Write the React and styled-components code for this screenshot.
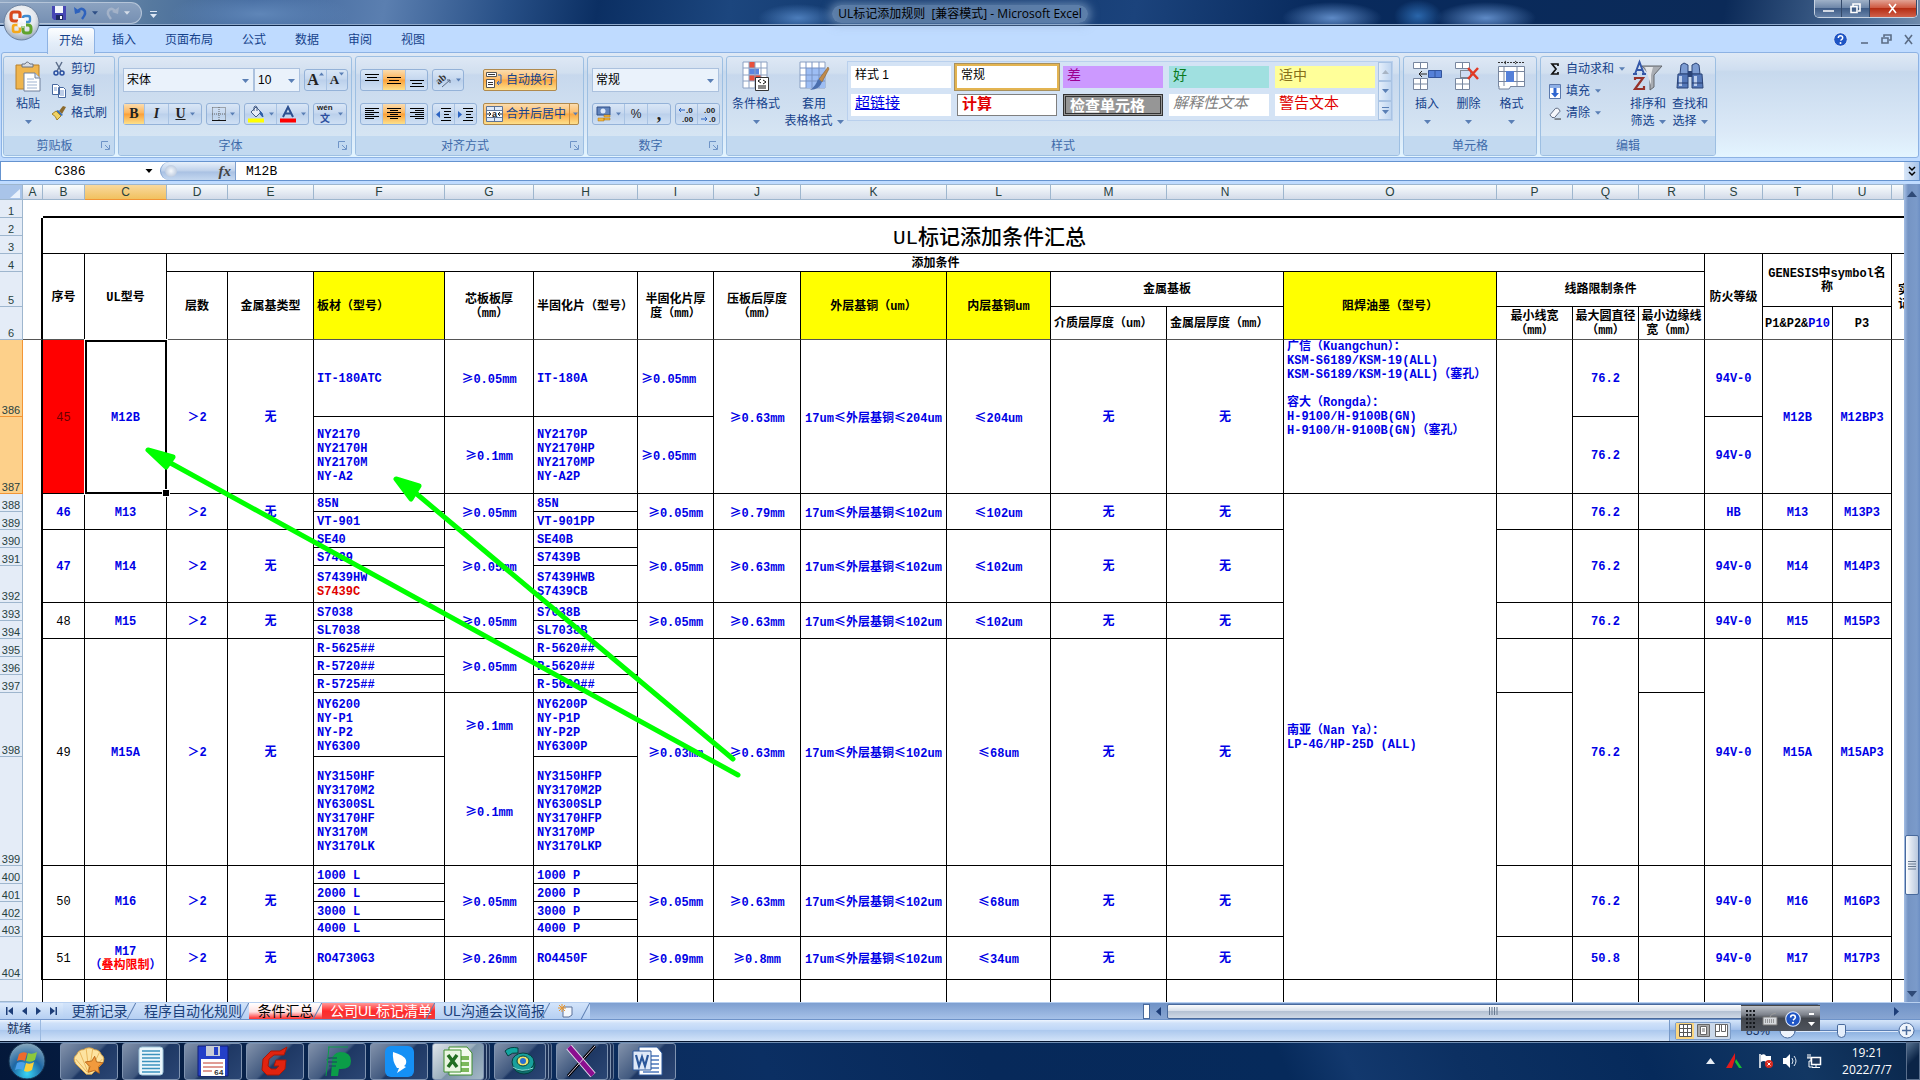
import styled, { createGlobalStyle, css } from 'styled-components'

const GlobalStyle = createGlobalStyle`
  * {
    box-sizing: border-box;
  }
  body {
    margin: 0;
    background: #0a2a5a;
  }
  button, input, select {
    font: inherit;
    color: inherit;
    margin: 0;
    padding: 0;
    border: 0;
    background: none;
    border-radius: 0;
  }
  svg {
    display: block;
    flex: none;
    overflow: visible;
  }
`

const Window = styled.div`
  display: flex;
  flex-direction: column;
  height: 100vh;
  overflow: hidden;
  background: #bfdbff;
  color: #15428b;
  font-family: 'Liberation Sans', 'Noto Sans CJK SC', sans-serif;
  font-size: 12px;
  line-height: 16px;
`

/* ---------- title bar ---------- */

const TitleBar = styled.header`
  position: relative;
  display: flex;
  align-items: flex-start;
  justify-content: space-between;
  height: 26px;
  flex: none;
  border-bottom: 1px solid #10294d;
  box-shadow: inset 0 -1px 0 #8ea9cc;
  background:
    radial-gradient(ellipse 50px 16px at 1332px 18px, #5e8ac6, transparent),
    radial-gradient(ellipse 24px 16px at 1418px 16px, #2a66ab, transparent),
    radial-gradient(ellipse 50px 16px at 1486px 18px, #5e8ac6, transparent),
    radial-gradient(ellipse 40px 14px at 798px 18px, #4c7dbb, transparent),
    radial-gradient(ellipse 90px 22px at 260px 14px, #5f86b8, transparent),
    linear-gradient(100deg, #93a9c4 0, #56799f 150px, #3f659a 250px, #5b7fb0 380px, #274f86 500px, #0b2f63 590px, #1c467e 720px, #0e3468 900px, #1b437c 1120px, #082a5d 1300px, #0b2a58 1700px, #53749d 1850px, #7c95b3 1920px);
`
const QuickAccess = styled.div`
  display: flex;
  align-items: center;
  gap: 8px;
  height: 22px;
  width: 142px;
  margin-top: 2px;
  padding-left: 52px;
  border: 1px solid #b4c4d8;
  border-left: 0;
  border-radius: 0 11px 11px 0;
  background: linear-gradient(#8ba2c0, #7690b3);
`
const QuickItem = styled.button`
  display: flex;
  align-items: center;
  gap: 5px;
`
const QuickMore = styled.button`
  margin: 11px auto 0 8px;
`
const OfficeButton = styled.button`
  position: absolute;
  left: 3px;
  top: 4px;
  z-index: 3;
`
const Title = styled.h1`
  margin: 5px 0 0;
  font: 400 12px/18px 'Open Sans', 'Noto Sans CJK SC', sans-serif;
  color: #000;
  white-space: pre;
  padding: 0 6px;
  border-radius: 9px;
  background: rgba(150, 178, 212, 0.55);
  box-shadow: 0 0 8px 3px rgba(150, 178, 212, 0.55);
`
const Caption = styled.div`
  display: flex;
  width: 104px;
  height: 18px;
  margin-right: 2px;
  border: 1px solid #c7d3e2;
  border-top: 0;
  border-radius: 0 0 5px 5px;
  overflow: hidden;
`
const CaptionButton = styled.button`
  display: flex;
  align-items: center;
  justify-content: center;
  flex: ${(props) => (props.$close ? 47 : 27)};
  border-right: 1px solid #33496a;
  background: ${(props) =>
    props.$close
      ? 'linear-gradient(#e2a294, #cf5a42 45%, #b52d14 50%, #d0604a)'
      : 'linear-gradient(#9fb1c8, #6e87a9 45%, #3f5c86 50%, #6783a9)'};
`
const TitleSide = styled.div`
  display: flex;
  flex: 1;
  align-items: flex-start;
  justify-content: ${(props) => (props.$end ? 'flex-end' : 'flex-start')};
`

/* ---------- ribbon ---------- */

const TabRow = styled.nav`
  display: flex;
  align-items: flex-end;
  gap: 5px;
  height: 26px;
  flex: none;
  padding-left: 47px;
`
const RibbonTab = styled.button`
  height: 25px;
  padding: 0 11px;
  border: 1px solid transparent;
  border-bottom: 0;
  color: #15428b;
  ${(props) =>
    props.$active &&
    css`
      position: relative;
      z-index: 1;
      height: 27px;
      margin: 0 0 -2px;
      border-color: #8db2e3;
      border-radius: 4px 4px 0 0;
      background: linear-gradient(#fdfeff, #e3edf9 60%, #dbe6f4);
    `}
`
const BookControls = styled.div`
  display: flex;
  align-items: center;
  gap: 11px;
  height: 26px;
  margin-left: auto;
  padding-right: 6px;
`
const Ribbon = styled.section`
  display: flex;
  gap: 3px;
  height: 106px;
  flex: none;
  margin: 0 1px;
  padding: 3px 1px 2px;
  border: 1px solid #8db2e3;
  border-radius: 3px;
  background: linear-gradient(#dfe9f5, #cfdef0 16%, #c7d9ed 18%, #dceaf8 78%, #e3f5ff);
`
const GroupBox = styled.section`
  display: flex;
  flex-direction: column;
  flex: none;
  width: ${(props) => props.$w}px;
  height: 100px;
  border: 1px solid #9dbfe2;
  border-radius: 3px;
  overflow: hidden;
  background: linear-gradient(#dee8f5, #d1dfef 16px, #c7d8ed 18px, #d6e5f3 79px);
`
const GroupBody = styled.div`
  display: flex;
  flex: 1;
  min-height: 0;
  padding: 0 4px;
`
const GroupTitle = styled.h2`
  display: flex;
  align-items: center;
  height: 19px;
  margin: 0;
  padding: 0 4px;
  font-size: 12px;
  font-weight: 400;
  color: #3e6aaa;
  background: #c2d9f0;
  span {
    flex: 1;
    text-align: center;
  }
`
const Stack = styled.div`
  display: flex;
  flex-direction: column;
  gap: ${(props) => props.$gap || 0}px;
  padding-top: ${(props) => props.$top || 0}px;
  padding-left: ${(props) => props.$inset || 0}px;
`
const Line = styled.div`
  display: flex;
  align-items: center;
  gap: 4px;
  height: 24px;
`
const BigButton = styled.button`
  display: flex;
  flex-direction: column;
  align-items: center;
  width: ${(props) => props.$w}px;
  padding-top: 4px;
  line-height: 17px;
  white-space: nowrap;
`
const BigIcon = styled.span`
  height: 35px;
`
const BigLabel = styled.span`
  display: flex;
  align-items: center;
  gap: 4px;
  min-height: 17px;
`
const SmallButton = styled.button`
  display: flex;
  align-items: center;
  gap: 5px;
  height: 22px;
  white-space: nowrap;
`
const ButtonSet = styled.div`
  display: flex;
  height: 22px;
  border: 1px solid #94b2d8;
  border-radius: 3px;
  background: linear-gradient(#d9e6f6, #c6d8ef 45%, #bbd0eb 50%, #cfe0f4);
`
const Tool = styled.button`
  display: flex;
  align-items: center;
  justify-content: center;
  gap: 4px;
  width: ${(props) => props.$w}px;
  color: #222;
  border-right: 1px solid #a9c3e3;
  &:last-child {
    border-right: 0;
  }
  ${(props) =>
    props.$on &&
    css`
      background: linear-gradient(#fbdcae, #fdb55b 45%, #fb9f38 50%, #fde08b);
    `}
`
const SizeTool = styled(Tool)`
  gap: 0;
  align-items: flex-start;
  svg {
    margin-top: 2px;
  }
`
const Letter = styled.span`
  font: 700 ${(props) => props.$size || 14}px/20px 'Liberation Serif', serif;
  font-style: ${(props) => (props.$italic ? 'italic' : 'normal')};
  text-decoration: ${(props) => (props.$under ? 'underline' : 'none')};
`
const WideTool = styled.button`
  display: flex;
  align-items: center;
  gap: 3px;
  width: ${(props) => props.$w}px;
  height: 22px;
  padding-left: 2px;
  white-space: nowrap;
  border: 1px solid #b08a4e;
  border-radius: 2px;
  background: linear-gradient(#fbdcae, #fdbd6a 45%, #fba743 50%, #fde08b);
`
const SplitArrow = styled.span`
  display: flex;
  align-items: center;
  align-self: stretch;
  margin-left: auto;
  padding: 0 3px;
  border-left: 1px solid #c98e3f;
`
const Rule = styled.span`
  width: 1px;
  height: 64px;
  margin: 14px 3px 0 3px;
  background: #8fb0da;
`
const ComboBox = styled.span`
  position: relative;
  display: flex;
  width: ${(props) => props.$w}px;
  height: 24px;
  border: 1px solid #abc1de;
  background: #eaf2fb;
  color: #000;
  select {
    flex: 1;
    min-width: 0;
    padding: 0 3px;
    appearance: none;
    outline: none;
  }
  svg {
    position: absolute;
    right: 4px;
    top: 10px;
    pointer-events: none;
  }
`
const ComboPair = styled.span`
  display: flex;
`
const Gallery = styled.div`
  display: flex;
  align-self: flex-start;
  width: 546px;
  height: 60px;
  margin-top: 4px;
  border: 1px solid #b9d0ed;
  background: #d4e3f5;
`
const Swatches = styled.div`
  display: grid;
  grid-template-columns: repeat(5, 100px);
  grid-auto-rows: 22px;
  gap: 6px;
  flex: 1;
  padding: 4px 3px;
`
const Swatch = styled.button`
  display: flex;
  align-items: flex-start;
  padding: 0 4px;
  text-align: left;
  line-height: 18px;
  font-size: ${(props) => props.$size || 15}px;
  color: ${(props) => props.$fg || '#000'};
  background: ${(props) => props.$bg || '#fff'};
  ${(props) => props.$bold && 'font-weight: 700;'}
  ${(props) => props.$italic && 'font-style: italic;'}
  ${(props) => props.$link && 'text-decoration: underline;'}
  ${(props) => props.$border && `border: ${props.$border};`}
  ${(props) => props.$picked && 'outline: 2px solid #e3b451; box-shadow: 0 0 0 3px #a8905e;'}
`
const GalleryScroll = styled.div`
  display: flex;
  flex-direction: column;
  width: 14px;
  button {
    display: flex;
    flex: 1;
    align-items: center;
    justify-content: center;
    border: 1px solid #a9c3e3;
    background: linear-gradient(90deg, #e4eefa, #bfd5f0);
  }
`

/* ---------- formula bar ---------- */

const FormulaBar = styled.div`
  display: flex;
  flex: none;
  height: 20px;
  margin: 3px 0;
  border: 1px solid #6593cf;
  background: #fff;
  color: #000;
  font: 13px/16px 'Liberation Mono', monospace;
  input {
    min-width: 0;
    padding-top: 2px;
    outline: none;
  }
`
const NameBox = styled.div`
  display: flex;
  align-items: center;
  width: 159px;
  padding-right: 5px;
  input {
    width: 138px;
    text-align: center;
    margin-right: 6px;
  }
`
const FxArea = styled.div`
  display: flex;
  align-items: center;
  justify-content: space-between;
  width: 76px;
  padding: 0 4px;
  border: 1px solid #7ea0cf;
  border-width: 0 1px 0 1px;
  border-radius: 10px 0 0 10px;
  background: linear-gradient(#e8f0fa, #bdd0ea 50%, #a9c1e3 55%, #c5d8f0);
  i {
    width: 12px;
    height: 12px;
    border-radius: 50%;
    background: radial-gradient(#f6f9fd, #a8bad4);
  }
`
const FxButton = styled.button`
  font: italic 700 15px/16px 'Liberation Serif', serif;
  color: #444;
`
const FormulaInput = styled.input`
  flex: 1;
  padding-left: 10px;
`
const Expand = styled.button`
  display: flex;
  align-items: center;
  justify-content: center;
  width: 15px;
  background: linear-gradient(90deg, #d8e6f8, #a9c5ea);
`

/* ---------- sheet ---------- */

const SheetArea = styled.main`
  position: relative;
  display: flex;
  flex: 1;
  min-height: 0;
  overflow: hidden;
  background: #fff;
`
const Grid = styled.table`
  flex: 1;
  align-self: flex-start;
  width: 100%;
  min-width: 0;
  table-layout: fixed;
  border-collapse: separate;
  border-spacing: 0;
  color: #000;
  font: 700 12px/14px 'Liberation Mono', 'Noto Sans CJK SC', monospace;
`
const ColHead = styled.th`
  height: 16px;
  padding: 0;
  overflow: hidden;
  font: 400 12px/14px 'Liberation Sans', sans-serif;
  color: #27413e;
  border-right: 1px solid #9eb6ce;
  border-bottom: 1px solid ${(props) => (props.$on ? '#f29536' : '#9eb6ce')};
  border-top: 1px solid #9eb6ce;
  background: ${(props) => (props.$on ? 'linear-gradient(#f9d99f, #f1c15f)' : 'linear-gradient(#f9fcfd, #d3dbe9)')};
`
const Corner = styled.th`
  padding: 0;
  border: 1px solid #9eb6ce;
  border-left: 0;
  background: #a9c4e9;
  svg {
    margin: 3px 2px 0 auto;
  }
`
const RowHead = styled.th`
  padding: 0;
  vertical-align: bottom;
  font: 400 11px/12px 'Liberation Sans', sans-serif;
  color: #27413e;
  border-right: 1px solid ${(props) => (props.$on ? '#f29536' : '#9eb6ce')};
  border-bottom: 1px solid ${(props) => (props.$on ? '#f29536' : '#9eb6ce')};
  background: ${(props) => (props.$on ? '#fdd08a' : '#e4ecf7')};
`
const Margin = styled.td`
  padding: 0;
  border-right: ${(props) => props.$edge}px solid #000;
  border-bottom: ${(props) => (props.$frozen ? '1px solid #555' : '0')};
`
const Cell = styled.td`
  position: relative;
  padding: ${(props) => (props.$top ? 0 : 2)}px 0 0 ${(props) => (props.$indent ? 6 : props.$left ? 3 : 0)}px;
  overflow: ${(props) => (props.$selected ? 'visible' : 'hidden')};
  white-space: pre;
  text-align: ${(props) => (props.$left ? 'left' : 'center')};
  vertical-align: ${(props) => (props.$top ? 'top' : 'middle')};
  color: ${(props) => props.$fg || '#0000e6'};
  background: ${(props) => props.$bg || 'transparent'};
  font-weight: ${(props) => (props.$plain ? 400 : 700)};
  border-right: ${(props) => (props.$noRight ? '0' : '1px solid #000')};
  border-bottom: ${(props) => (props.$noBottom ? '0' : props.$frozen ? '1px solid #555' : '1px solid #000')};
`
const TopCell = styled.td`
  border-bottom: 2px solid #000;
`
const TitleCell = styled.td`
  padding: 6px 0 0 32px;
  text-align: center;
  font: 500 21px/28px 'Liberation Mono', 'Noto Sans CJK SC', monospace;
  border-bottom: 1px solid #000;
`
const Wide = styled.span`
  font-family: 'Noto Sans CJK SC', sans-serif;
`
const Tint = styled.span`
  color: ${(props) => props.$fg};
`
const Selection = styled.span`
  position: absolute;
  inset: 0 -1px -1px 0;
  z-index: 1;
  border: 2px solid #000;
  box-shadow: 0 0 0 1px #fff;
  &::after {
    content: '';
    position: absolute;
    right: -5px;
    bottom: -5px;
    width: 6px;
    height: 6px;
    border: 1px solid #fff;
    background: #000;
  }
`
const Arrows = styled.svg`
  position: absolute;
  left: 0;
  top: 0;
  z-index: 2;
  pointer-events: none;
`
const VScroll = styled.div`
  display: flex;
  flex-direction: column;
  align-items: center;
  flex: none;
  width: 16px;
  padding: 7px 0 5px;
  background: linear-gradient(90deg, #a3bde3 0, #7594c4 25%, #7b9bca 80%, #6d8fc4);
`
const VThumb = styled.div`
  display: flex;
  align-items: center;
  justify-content: center;
  width: 14px;
  height: 60px;
  border: 1px solid #48699c;
  border-radius: 2px;
  background: linear-gradient(90deg, #fff, #dfe6f0 40%, #b9c8de);
`
const Spring = styled.span`
  flex: ${(props) => props.$n};
`

/* ---------- sheet tabs and status ---------- */

const Bottom = styled.footer`
  position: relative;
  flex: none;
`
const TabStrip = styled.div`
  display: flex;
  height: 17px;
  border-top: 1px solid #b8d0f0;
  background: linear-gradient(#7e9fd0, #a6c1e8);
`
const TabNav = styled.div`
  display: flex;
  align-items: center;
  justify-content: space-between;
  width: 63px;
  padding: 0 6px;
  background: linear-gradient(#dceafb, #b5cff2);
`
const SheetTab = styled.button`
  position: relative;
  width: ${(props) => props.$w}px;
  height: 16px;
  padding: 0 8px 1px;
  overflow: hidden;
  text-align: center;
  white-space: nowrap;
  font-size: 14px;
  line-height: 14px;
  color: ${(props) => props.$fg || '#1a3f7a'};
  background: ${(props) => props.$bg || 'linear-gradient(#d3e4fa, #b5cff2)'};
  &::after {
    content: '';
    position: absolute;
    top: -2px;
    right: 4px;
    width: 1px;
    height: 20px;
    background: #5f80b4;
    transform: rotate(28deg);
  }
`
const HScroll = styled.div`
  display: flex;
  align-items: center;
  width: 777px;
  margin-left: auto;
  padding-right: 21px;
  background: linear-gradient(#6f92c6, #87a5d2);
`
const SplitGrip = styled.span`
  width: 7px;
  height: 15px;
  margin-right: 6px;
  border: 1px solid #48699c;
  background: #fff;
`
const HThumb = styled.div`
  display: flex;
  align-items: center;
  justify-content: center;
  width: 652px;
  height: 15px;
  margin: 0 auto 0 6px;
  border: 1px solid #48699c;
  border-radius: 2px;
  background: linear-gradient(#fafcfe, #d7dfea 45%, #b5c2d4 50%, #cfd9e6);
`
const StatusBar = styled.div`
  display: flex;
  align-items: stretch;
  height: 22px;
  border-top: 1px solid #6e93c9;
  color: #15305c;
  background: linear-gradient(#eef5fe 0, #cfe1f9 15%, #bfd7f7 45%, #adc9ee 50%, #d2e3f8);
`
const StatusText = styled.span`
  width: 41px;
  padding: 1px 7px;
  border-right: 1px solid #9bb9e0;
`
const StatusRight = styled.div`
  display: flex;
  align-items: center;
  width: 251px;
  margin-left: auto;
  padding: 0 5px;
  border-left: 1px solid #7799c8;
  background: linear-gradient(#d5e5f9, #a3c0ea 45%, #89aede 50%, #b0cdf0);
`
const ViewButtons = styled.div`
  display: flex;
  height: 18px;
  border: 1px solid #7d9dc9;
  border-radius: 2px;
  background: #cbd9ea;
`
const ViewButton = styled.button`
  display: flex;
  align-items: center;
  justify-content: center;
  width: 18px;
  background: ${(props) => (props.$on ? '#fbd680' : 'transparent')};
`
const ZoomValue = styled.button`
  width: 42px;
  margin-left: 6px;
`
const ZoomRange = styled.input`
  flex: 1;
  min-width: 0;
  appearance: none;
  height: 16px;
  background: linear-gradient(transparent 7px, #5b7fb4 7px, #5b7fb4 8px, #dce9fa 8px, #dce9fa 9px, transparent 9px);
  &::-webkit-slider-thumb {
    appearance: none;
    width: 9px;
    height: 14px;
    border: 1px solid #47699c;
    border-radius: 2px 2px 5px 5px;
    background: #e4eefb;
  }
`
const ImeBar = styled.div`
  position: absolute;
  right: 100px;
  top: 3px;
  display: flex;
  align-items: center;
  gap: 7px;
  width: 79px;
  height: 26px;
  padding: 0 5px;
  border-top: 1px solid #444;
  background: linear-gradient(#b9bec6, #7d828b 35%, #43474e 50%, #4e535c);
`

/* ---------- taskbar ---------- */

const TaskBar = styled.footer`
  display: flex;
  align-items: center;
  flex: none;
  height: 39px;
  border-top: 1px solid #05152f;
  box-shadow: inset 0 1px 0 #6f8cb0;
  background: linear-gradient(65deg, #04183a 0, #0a2854 380px, #0b2f63 700px, #07295a 900px, #062a5b 1170px, #12386d 1230px, #0c3062 1330px, #062a5b 1500px, #123763 1640px, #092549 1760px);
`
const StartButton = styled.button`
  width: 60px;
  padding-left: 8px;
`
const TaskButton = styled.button`
  display: flex;
  align-items: center;
  justify-content: center;
  width: 58px;
  height: 37px;
  margin-right: 4px;
  border: 1px solid #7f93b0;
  border-radius: 3px;
  background: ${(props) =>
    props.$on
      ? 'linear-gradient(135deg, #dfe5ea, #9aaebd 50%, #7c94a8 52%, #a5b9c8)'
      : 'linear-gradient(135deg, #8292ab, #41597f 48%, #1e3864 52%, #2b4674)'};
  ${(props) =>
    props.$stack &&
    css`
      width: 52px;
      margin-right: 10px;
      box-shadow: 2px 0 0 #1c3158, 3px 0 0 #7f93b0, 5px 0 0 #1c3158, 6px 0 0 #5e7596;
    `}
`
const Tray = styled.div`
  display: flex;
  align-items: center;
  gap: 8px;
  margin-left: auto;
  padding-right: 6px;
`
const Clock = styled.time`
  width: 78px;
  font: 12px/17px 'Open Sans', sans-serif;
  text-align: center;
  color: #fff;
`
const ShowDesktop = styled.button`
  width: 14px;
  height: 38px;
  border: 1px solid #5a6f8d;
  background: linear-gradient(135deg, #55708f, #0b2447 50%);
`

/* ---------- drawings ---------- */

const Caret = ({ color = '#5a7fb5', w = 7, up }) => (
  <svg width={w} height="4" viewBox="0 0 7 4">
    <path d={up ? 'M0 4h7L3.5 0z' : 'M0 0h7L3.5 4z'} fill={color} />
  </svg>
)

const Launcher = () => (
  <svg width="9" height="9" viewBox="0 0 9 9" fill="none" stroke="#6f94c7">
    <path d="M.5 7V.5H7M4 4l4 4M8.5 4v4.5H4" />
  </svg>
)

const OfficeLogo = () => (
  <svg width="37" height="37" viewBox="0 0 37 37">
    <defs>
      <radialGradient id="orb" cx="50%" cy="35%" r="65%">
        <stop offset="0" stopColor="#fff" />
        <stop offset=".6" stopColor="#e2e6ec" />
        <stop offset="1" stopColor="#9aa9bd" />
      </radialGradient>
    </defs>
    <circle cx="18.5" cy="18.5" r="17.5" fill="url(#orb)" stroke="#6b819f" />
    <g fill="none">
      <path d="M15 17h-4q-3 0-3-3v-3q0-3 3-3h4q2 0 2 2v4" stroke="#d8491c" strokeWidth="3.200" />
      <path d="M20 14q0-2 2-2h3q2 0 2 2v2q0 2-2 2h-2" stroke="#3f8bd0" strokeWidth="2.400" />
      <path d="M15 21h-3q-2 0-2 2v3q0 2 2 2h3q2 0 2-2v-3" stroke="#f5a81c" strokeWidth="2.600" />
      <path d="M20 22v4q0 3 3 3h2q3 0 3-3v-2q0-3-3-3h-2" stroke="#5fa32c" strokeWidth="3" />
      <path d="M17 15v3h-3M20 15v3h3M17 24v-3h-3M20 24v-3h3" stroke="#fff" />
    </g>
  </svg>
)

const SaveIcon = () => (
  <svg width="14" height="14" viewBox="0 0 14 14">
    <path d="M0 0h14v14H2l-2-2z" fill="#4646b4" />
    <path d="M3 0h8v7H3z" fill="#f2f5fb" />
    <path d="M4 9h7v5H4z" fill="#1f2a62" />
    <path d="M8 10h2v3H8z" fill="#fff" />
  </svg>
)

const UndoIcon = ({ color = '#2e62bd', flip }) => (
  <svg width="13" height="14" viewBox="0 0 13 14">
    <g transform={flip ? 'translate(13 0) scale(-1 1)' : undefined}>
      <path d="M0 1l1 7 6-2z" fill={color} />
      <path d="M3 6q4-5 7-2t-2 9" fill="none" stroke={color} strokeWidth="2.500" />
    </g>
  </svg>
)

const PasteIcon = () => (
  <svg width="26" height="32" viewBox="0 0 26 32">
    <path d="M1 4h23v24H1z" fill="#efb54e" stroke="#b9802b" />
    <path d="M7 6V3h3q2-4 5 0h3v3z" fill="#d7dbe2" stroke="#6b7280" />
    <path d="M9 12h11l5 5v13H9z" fill="#fff" stroke="#71809b" />
    <path d="M20 12v5h5" fill="#dce6f4" stroke="#71809b" />
    <path d="M12 18h7M12 21h10M12 24h10M12 27h10" stroke="#9fb3d1" />
  </svg>
)

const CutIcon = () => (
  <svg width="14" height="14" viewBox="0 0 14 14" fill="none">
    <path d="M4 0l5 9M10 0L5 9" stroke="#5d6f8c" strokeWidth="1.500" />
    <circle cx="4" cy="11" r="2" stroke="#2a4fa0" strokeWidth="1.500" />
    <circle cx="10" cy="11" r="2" stroke="#2a4fa0" strokeWidth="1.500" />
  </svg>
)

const CopyIcon = () => (
  <svg width="14" height="14" viewBox="0 0 14 14" fill="#fff" stroke="#47689f">
    <path d="M.5.500h5l2 2v8h-7zM6.500 3.500h5l2 2v8h-7z" />
    <path d="M2 4h3M2 6h3M8 7h4M8 9h4M8 11h4" stroke="#7b9bd0" />
  </svg>
)

const BrushIcon = () => (
  <svg width="14" height="14" viewBox="0 0 14 14">
    <path d="M14 1l-3-1-4 5 3 3z" fill="#8c6a2c" />
    <path d="M6 4l5 5-2 1-5-5z" fill="#3b6fb0" />
    <path d="M4 5l5 5-4 4q-1-4-5-6z" fill="#f0d264" stroke="#a58428" />
  </svg>
)

const Bars = ({ rows, indent }) => (
  <svg width="16" height="15" viewBox="0 0 16 15">
    {rows.map(([x, y, w]) => (
      <path key={y} d={`M${x} ${y}.500h${w}`} stroke="#000" strokeWidth="1" />
    ))}
    {indent === 'out' && <path d="M4 4v7L0 7.500z" fill="#2b63c2" />}
    {indent === 'in' && <path d="M0 4v7l4-3.500z" fill="#2b63c2" />}
  </svg>
)

const lines = (y, list, x = 1) => list.map((w, i) => [x + (14 - w) / 2, y + i * 3, w])
const centred = (list) => list.map((w, i) => [8 - w / 2, 1 + i * 2, w])
const leftBars = [14, 9, 14, 9, 14, 9].map((w, i) => [1, 1 + i * 2, w])
const rightBars = [14, 9, 14, 9, 14, 9].map((w, i) => [15 - w, 1 + i * 2, w])
const indentBars = [[5, 1, 10], [8, 4, 7], [8, 7, 5], [8, 10, 7], [5, 13, 10]]

const OrientIcon = () => (
  <svg width="16" height="18" viewBox="0 0 16 18">
    <text x="1" y="11" transform="rotate(-40 6 10)" fontSize="10" fontWeight="700" fontFamily="Liberation Serif" fill="#333">
      ab
    </text>
    <path d="M6 16l8-7M14 9h-3M14 9v3" stroke="#5b6b85" fill="none" />
  </svg>
)

const WrapIcon = () => (
  <svg width="17" height="16" viewBox="0 0 17 16" fill="none">
    <path d="M.5.500h10v4H.5zM.5 7.500h8v8h-8z" fill="#fff" stroke="#555" />
    <path d="M2 2.500h7M2 10.500h5M2 12.500h5" stroke="#333" />
    <path d="M12 3h3v8h-4M13 9l-2 2 2 2" stroke="#2b63c2" />
  </svg>
)

const MergeIcon = () => (
  <svg width="17" height="16" viewBox="0 0 17 16" fill="none">
    <path d="M.5.500h16v15H.5z" fill="#dfe9f8" stroke="#5d7396" />
    <path d="M.5 4.500h16M.5 11.500h16M8.500.500v4M8.500 11.500v4" stroke="#5d7396" />
    <path d="M1 5h15v6H1z" fill="#fff" />
    <text x="6" y="11" fontSize="9" fontWeight="700" fontFamily="Liberation Sans" fill="#222">
      a
    </text>
    <path d="M1 8h4M3 6l2 2-2 2M16 8h-4M14 6l-2 2 2 2" stroke="#222" />
  </svg>
)

const BorderIcon = () => (
  <svg width="14" height="14" viewBox="0 0 14 14" fill="none">
    <path d="M.5.500h13v13M.5.500v13M7 0v13M0 7h14" stroke="#666" strokeDasharray="1 1" />
    <path d="M0 13.500h14" stroke="#111" />
  </svg>
)

const FillIcon = () => (
  <svg width="17" height="17" viewBox="0 0 17 17">
    <path d="M3 6l5-5 5 5-5 5z" fill="#e8edf6" stroke="#445c85" />
    <path d="M6 5V1q1-2 3 0v4" fill="none" stroke="#445c85" />
    <path d="M12 5q3 2 3 6-3-1-3-6" fill="#2f5fa8" stroke="#2f5fa8" />
    <path d="M0 12.500h16v4H0z" fill="#ff0" />
  </svg>
)

const FontColorIcon = () => (
  <svg width="17" height="17" viewBox="0 0 17 17">
    <path d="M3 11L8 1l5 10M5 7.500h6" stroke="#2c4f8f" strokeWidth="2" fill="none" />
    <path d="M0 12.500h16v4H0z" fill="#f00" />
  </svg>
)

const PhoneticIcon = () => (
  <svg width="17" height="20" viewBox="0 0 17 20">
    <text x="0" y="6" fontSize="8" fontFamily="Liberation Sans" fontWeight="700" fill="#222">
      wén
    </text>
    <text x="3" y="18" fontSize="10" fontFamily="Noto Sans CJK SC" fontWeight="700" fill="#2c4f9f">
      文
    </text>
  </svg>
)

const MoneyIcon = () => (
  <svg width="16" height="16" viewBox="0 0 16 16">
    <path d="M1 1h13v8H1z" fill="#6385bd" stroke="#2f4f88" />
    <circle cx="7" cy="5" r="2.500" fill="#dce8fa" />
    <path d="M8 9h6v2H8zM8 12h6v2H8zM2 12h6v3H2z" fill="#f2b63c" stroke="#a87216" strokeWidth=".5" />
  </svg>
)

const DecimalIcon = ({ less }) => (
  <svg width="17" height="17" viewBox="0 0 17 17" fontFamily="Liberation Sans" fontSize="8" fontWeight="700" fill="#222">
    <text x={less ? 4 : 8} y="7">
      {less ? '.00' : '.0'}
    </text>
    <text x={less ? 9 : 4} y="16">
      {less ? '.0' : '.00'}
    </text>
    <path d={less ? 'M1 13h6M5 11l2 2-2 2' : 'M1 4h6M3 2L1 4l2 2'} stroke="#2b63c2" fill="none" />
  </svg>
)

const CondIcon = () => (
  <svg width="28" height="30" viewBox="0 0 28 30">
    <path d="M1 1h24v26H1z" fill="#fff" stroke="#8ba0c2" />
    <path d="M7 1h6v6H7zM7 14h12v6H7z" fill="#e8503c" />
    <path d="M7 7.500h10v6H7z" fill="#5b86e0" />
    <path d="M1 7h24M1 14h24M1 20h24M7 1v26M13 1v26M19 1v26" stroke="#8ba0c2" fill="none" />
    <path d="M13.500 16.500h13v13h-13z" fill="#fff" stroke="#333" />
    <path d="M19 18l-3 2 3 2M21 19l3 2-3 2M16 25h8M16 27h8" stroke="#111" fill="none" />
  </svg>
)

const TableFormatIcon = () => (
  <svg width="30" height="30" viewBox="0 0 30 30">
    <path d="M1 1h25v26H1z" fill="#fff" stroke="#8ba0c2" />
    <path d="M7 7h19v20H7z" fill="#9dbdf3" />
    <path d="M1 7h25M1 14h25M1 20h25M7 1v26M13 1v26M20 1v26" stroke="#7893c4" fill="none" />
    <path d="M29 6l-9 12 3 3 7-13z" fill="#c08a4a" stroke="#7c5524" strokeWidth=".5" />
    <path d="M19 18l4 3q-2 7-12 8 6-4 8-11z" fill="#4b6fae" />
  </svg>
)

const CellsIcon = ({ kind }) => (
  <svg width="30" height="30" viewBox="0 0 30 30" fill="#fff" stroke="#77869f">
    {kind === 'format' ? (
      <>
        <path d="M1.500 5.500h26v20h-26z" />
        <path d="M7 5v20M20 5v20M1 10.500h26M1 20.500h26" />
        <path d="M9 10h8v11H9z" fill="#5580d8" stroke="none" />
        <path d="M1 1.500h26M9 0l-2 1.500 2 1.500M18 0l2 1.500-2 1.500" stroke="#333" strokeDasharray="2 1" fill="none" />
        <path d="M2 25v3h10l2-3" />
      </>
    ) : (
      <>
        <path d="M1.500 1.500h14v6h-14zM8.500 1.500v6M1.500 17.500h14v11h-14zM8.500 17.500v11M1.500 23h14" />
        {kind === 'insert' ? (
          <>
            <path d="M16.500 9.500h13v7h-13zM23 9.500v7" fill="#5580d8" stroke="#33549b" />
            <path d="M15 13H7M10 10l-3 3 3 3" stroke="#222" fill="none" />
          </>
        ) : (
          <>
            <path d="M6.500 9.500h10v7h-10z" strokeDasharray="1 1" fill="#cfdcf2" stroke="#333" />
            <path d="M14 7l10 11M24 7L14 18" stroke="#e03a25" strokeWidth="2.500" />
          </>
        )}
      </>
    )}
  </svg>
)

const SigmaIcon = () => (
  <svg width="12" height="14" viewBox="0 0 12 14" fill="none">
    <path d="M9 4V2H3l4 5-4 5h6v-2" stroke="#111" strokeWidth="1.700" />
  </svg>
)

const FillDownIcon = () => (
  <svg width="12" height="15" viewBox="0 0 12 15">
    <path d="M.5.500h11v14H.5z" fill="#fff" stroke="#5b79ad" />
    <path d="M1 1h10v3H1z" fill="#8fb0e6" />
    <path d="M4.500 4h3v5H10l-4 4.500L2 9h2.500z" fill="#2f66d0" />
  </svg>
)

const EraserIcon = () => (
  <svg width="12" height="13" viewBox="0 0 13 13">
    <path d="M1 8l6-7q2-1 4 1l1 2-6 7q-3 1-5-3z" fill="#f5f7fb" stroke="#55627a" />
    <path d="M6 12.500h7" stroke="#222" />
  </svg>
)

const SortIcon = () => (
  <svg width="30" height="30" viewBox="0 0 30 30">
    <path d="M9 5h20l-8 9v12l-4 3V14z" fill="#a9adb3" stroke="#65696f" />
    <path d="M12 6h8l-2 8v10z" fill="#e4e6e9" />
    <path d="M2 13L6.500 1 11 13M4 9h5M0 13h4M9 13h4" stroke="#3558a8" strokeWidth="2" fill="none" />
    <path d="M2 19v-2h8L2 28h9v-3" stroke="#96322b" strokeWidth="2.200" fill="none" />
  </svg>
)

const FindIcon = () => (
  <svg width="28" height="30" viewBox="0 0 28 30">
    <path d="M5 4l3-2 4 2v9H4zM16 4l4-2 3 2 1 9h-8z" fill="#7c9cd2" stroke="#2b4478" />
    <path d="M2 13h10v14H1zM16 13h10l1 14H16z" fill="#5578b8" stroke="#2b4478" />
    <path d="M12 10h4v6h-4z" fill="#2b4478" />
    <path d="M3 15h3v10H3zM18 15h3v10h-3z" fill="#bccfee" />
    <path d="M1 22h11M16 22h11" stroke="#243b6c" />
  </svg>
)

const HelpIcon = ({ size = 15 }) => (
  <svg width={size} height={size} viewBox="0 0 15 15">
    <circle cx="7.500" cy="7.500" r="6.800" fill="#1f55c4" stroke="#dfeafc" />
    <path d="M5.300 6q0-2.200 2.200-2.200T9.700 6q0 1-2.200 2.500" stroke="#fff" strokeWidth="1.500" fill="none" />
    <circle cx="7.500" cy="11" r="1" fill="#fff" />
  </svg>
)

const Glyph = ({ d, w = 11, color = '#5c6d86' }) => (
  <svg width={w} height="11" viewBox="0 0 11 11" fill="none" stroke={color} strokeWidth="1.600">
    <path d={d} />
  </svg>
)

const StartOrb = () => (
  <svg width="38" height="38" viewBox="0 0 38 38">
    <defs>
      <radialGradient id="start" cx="50%" cy="85%" r="85%">
        <stop offset="0" stopColor="#38d6f5" />
        <stop offset=".5" stopColor="#1e67a4" />
        <stop offset="1" stopColor="#8ba9bd" />
      </radialGradient>
    </defs>
    <circle cx="19" cy="19" r="18" fill="url(#start)" stroke="#16324f" />
    <path d="M11 12q4-3 8-1l-2 8q-4-2-8 0z" fill="#ee6a2c" />
    <path d="M20 11q4 2 9-1l-2 8q-4 3-9 1z" fill="#8cc83c" />
    <path d="M9 21q4-2 8 0l-2 7q-4-2-8 0z" fill="#4aa0ea" />
    <path d="M18 21q4 2 8-1l-2 8q-4 3-8 1z" fill="#fbcf3a" />
  </svg>
)

const ShellIcon = () => (
  <svg width="32" height="30" viewBox="0 0 34 30">
    <path d="M12 27L3 18Q-1 12 4 8 6 3 11 3q6-4 12 0 5 0 7 5 5 4 1 10l-9 9-2 2h-6z" fill="#fde3a0" stroke="#d9a345" />
    <path d="M15 27L3 13M16 27L7 5M17 27L14 2M17 27l4-25M18 27L28 6M19 27l12-14" stroke="#e8b45a" />
    <path d="M23 10l2 6 7 1-5 4 1 7-5-3-7 2 2-6-5-5 7-1z" fill="#f29a3c" stroke="#b5651a" />
  </svg>
)

const NotesIcon = () => (
  <svg width="26" height="30" viewBox="0 0 26 30">
    <rect x="1" y="1" width="24" height="28" rx="3" fill="#eaf6fc" stroke="#9fc5da" />
    <path d="M4 5h18M4 8.500h18M4 12h18M4 15.500h18M4 19h18M4 22.500h18M4 26h18" stroke="#3c92bd" strokeWidth="1.500" />
  </svg>
)

const FloppyIcon = () => (
  <svg width="32" height="32" viewBox="0 0 32 32">
    <path d="M1 1h30v30H1z" fill="#2440c8" stroke="#101e78" />
    <path d="M9 1h14v10H9z" fill="#c8ccd6" />
    <path d="M17 2h4v8h-4z" fill="#2440c8" />
    <path d="M4 14h24v17H4z" fill="#fff" />
    <path d="M6 18h20M6 22h20M6 26h9" stroke="#c0392b" />
    <text x="17" y="30" fontSize="8" fontFamily="Liberation Mono" fontWeight="700" fill="#333">
      64
    </text>
  </svg>
)

const RedGIcon = () => (
  <svg width="30" height="30" viewBox="0 0 30 30">
    <path d="M27 1l-3 8H14l-5 4-1 7 3 3h5l3-3h-5l2-6h10l-1 9-6 6H7l-5-5 1-11 8-8h9z" fill="#e2230f" stroke="#a81809" />
  </svg>
)

const GreenPIcon = () => (
  <svg width="30" height="32" viewBox="0 0 30 32">
    <path d="M18 7q11 0 11 9t-12 8l-1 7H9l1-14q0-9 8-10z" fill="#0b9d48" />
    <path d="M6 2h20M7 2L4 31M4 15l12-5" stroke="#0b9d48" fill="none" />
    <path d="M6 13h9M6 17h9M7 21h7" stroke="#1f3c64" />
  </svg>
)

const BirdIcon = () => (
  <svg width="29" height="31" viewBox="0 0 29 31">
    <rect width="29" height="31" rx="6" fill="#1590f5" />
    <path d="M8 6q11 3 13 8 1 4-2 6l2 1-9 6 2-5h-2q-5-7-4-16z" fill="#fff" />
  </svg>
)

const ExcelIcon = () => (
  <svg width="32" height="32" viewBox="0 0 32 32">
    <path d="M7 2h18l5 6v22H7z" fill="#f4faf0" stroke="#3f8f2f" />
    <path d="M18 11h9v4h-9zM18 17h9v4h-9zM18 23h9v4h-9z" fill="#7db85c" />
    <path d="M2 5h17v22H2z" fill="#eaf5e2" stroke="#3f8f2f" />
    <path d="M6 10l9 12M15 10L6 22" stroke="#226e22" strokeWidth="3.500" />
  </svg>
)

const RingIcon = () => (
  <svg width="32" height="30" viewBox="0 0 32 30">
    <ellipse cx="20" cy="19" rx="11" ry="9" fill="#0d6f6c" stroke="#06403f" />
    <ellipse cx="19" cy="16" rx="11" ry="9" fill="#18a19c" stroke="#06403f" />
    <ellipse cx="19" cy="15" rx="6" ry="5" fill="#f2e36b" stroke="#06403f" />
    <circle cx="19" cy="15" r="3" fill="#2a6fd0" />
    <path d="M1 5q5-5 13-3v5q-6-1-10 3z" fill="#12a5a0" stroke="#06403f" />
    <path d="M9 21q8 6 20 1" stroke="#8de0dc" fill="none" />
  </svg>
)

const CrossIcon = () => (
  <svg width="34" height="32" viewBox="0 0 34 32">
    <path d="M30 1L3 31" stroke="#000" strokeWidth="3" />
    <path d="M4 2l24 28" stroke="#e8dff0" strokeWidth="7" />
    <path d="M4 2l24 28" stroke="#8b0f8f" strokeWidth="5" />
    <path d="M30 1L3 31" stroke="#d8c8dd" strokeWidth="1" />
  </svg>
)

const WordIcon = () => (
  <svg width="32" height="32" viewBox="0 0 32 32">
    <path d="M8 2h18l5 6v22H8z" fill="#fff" stroke="#2b579a" />
    <path d="M19 11h9M19 15h9M19 19h9M19 23h9M12 27h16" stroke="#4c78bd" strokeWidth="1.500" />
    <path d="M2 6h18v19H2z" fill="#dfe9f8" stroke="#2b579a" />
    <path d="M5 10l3 11 3-9 3 9 3-11" stroke="#2b579a" strokeWidth="2.200" fill="none" />
  </svg>
)

const TrayIcon = ({ kind }) => (
  <svg width="16" height="16" viewBox="0 0 16 16" fill="none">
    {kind === 'alert' && (
      <>
        <path d="M9 0v6l-3 9H0z" fill="#e01b1b" />
        <path d="M10 6l6 9h-3L9 9z" fill="#18c030" />
      </>
    )}
    {kind === 'flag' && (
      <>
        <path d="M2 1v14" stroke="#fff" strokeWidth="1.500" />
        <path d="M3 2q4-2 5 1h5v6H8Q6 7 3 9z" fill="#fff" />
        <circle cx="11" cy="11" r="4" fill="#d92b20" />
        <path d="M9.500 9.500l3 3M12.500 9.500l-3 3" stroke="#fff" />
      </>
    )}
    {kind === 'sound' && (
      <>
        <path d="M1 5h3l4-4v14l-4-4H1z" fill="#fff" />
        <path d="M10 5q2 3 0 6M12 3q4 5 0 10" stroke="#dfe8f2" />
      </>
    )}
    {kind === 'net' && (
      <>
        <path d="M5.500 4.500h9v7h-9z" fill="#1c3558" stroke="#fff" strokeWidth="1.500" />
        <path d="M6 14.500h8M10 12v2M2 1v4M4 1v4M1 5h4v3H3v6h4" stroke="#fff" />
      </>
    )}
  </svg>
)

/* ---------- sheet contents ---------- */

const columns = [
  ['A', 20], ['B', 42], ['C', 82], ['D', 61], ['E', 86], ['F', 131], ['G', 89], ['H', 104],
  ['I', 76], ['J', 87], ['K', 146], ['L', 104], ['M', 116], ['N', 117], ['O', 213], ['P', 76],
  ['Q', 66], ['R', 66], ['S', 58], ['T', 70], ['U', 59],
]

const black = '#000'
const blue = '#0000e6'
const yellow = '#ffff00'
const head = (t, more) => ({ t, fg: black, ...more })
const left = (t, more) => ({ t, left: true, ...more })

const outer = '17um≤外层基铜≤102um'

const headRows = [
  {
    n: 4,
    h: 18,
    cells: [
      head('序号', { rs: 3, frozen: true }),
      head('UL型号', { rs: 3, frozen: true }),
      head('添加条件', { cs: 15 }),
      head('防火等级', { rs: 3, frozen: true }),
      head('GENESIS中symbol名\n称', { cs: 2, rs: 2 }),
      head('实\n记', { rs: 3, frozen: true, left: true, indent: true, noRight: true }),
    ],
  },
  {
    n: 5,
    h: 35,
    cells: [
      head('层数', { rs: 2, frozen: true }),
      head('金属基类型', { rs: 2, frozen: true }),
      head('板材（型号）', { rs: 2, frozen: true, left: true, bg: yellow }),
      head('芯板板厚\n（mm）', { rs: 2, frozen: true }),
      head('半固化片（型号）', { rs: 2, frozen: true, left: true }),
      head('半固化片厚\n度（mm）', { rs: 2, frozen: true }),
      head('压板后厚度\n（mm）', { rs: 2, frozen: true }),
      head('外层基铜（um）', { rs: 2, frozen: true, bg: yellow }),
      head('内层基铜um', { rs: 2, frozen: true, bg: yellow }),
      head('金属基板', { cs: 2 }),
      head('阻焊油墨（型号）', { rs: 2, frozen: true, bg: yellow }),
      head('线路限制条件', { cs: 3 }),
    ],
  },
  {
    n: 6,
    h: 33,
    cells: [
      head('介质层厚度（um）', { frozen: true, left: true }),
      head('金属层厚度（mm）', { frozen: true, left: true }),
      head('最小线宽\n（mm）', { frozen: true }),
      head('最大圆直径\n（mm）', { frozen: true }),
      head('最小边缘线\n宽（mm）', { frozen: true }),
      head('P1&P2&', { frozen: true, tint: { t: 'P10', fg: blue } }),
      head('P3', { frozen: true }),
    ],
  },
]

const block = (rs, no, name, f, g, h, i, j, k, l, q, s, more = {}) => [
  { t: no, rs, ...(more.no || { plain: true, fg: black }) },
  { t: name, rs, ...more.name },
  { t: '＞2', rs },
  { t: '无', rs },
  left(f),
  g,
  left(h),
  { t: i, rs },
  { t: j, rs },
  { t: k, rs },
  { t: l, rs },
  { t: '无', rs },
  { t: '无', rs },
  ...(more.ink ? [more.ink] : []),
  { t: '', rs: more.prs || rs },
  { t: q, rs },
  { t: '', rs: more.prs || rs },
  { t: s, rs },
  { t: more.code || name, rs },
  { t: `${more.code || name}P3`, rs },
]

const inks =
  '广信（Kuangchun）：\nKSM-S6189/KSM-19(ALL)\nKSM-S6189/KSM-19(ALL)（塞孔）\n\n容大（Rongda）：\nH-9100/H-9100B(GN)\nH-9100/H-9100B(GN)（塞孔）'

const bodyRows = [
  {
    n: 386,
    h: 77,
    on: true,
    cells: [
      { t: '45', rs: 2, plain: true, fg: '#6b0000', bg: '#ff0000' },
      { t: 'M12B', rs: 2, selected: true },
      { t: '＞2', rs: 2 },
      { t: '无', rs: 2 },
      left('IT-180ATC'),
      { t: '≥0.05mm' },
      left('IT-180A'),
      left('≥0.05mm'),
      { t: '≥0.63mm', rs: 2 },
      { t: '17um≤外层基铜≤204um', rs: 2 },
      { t: '≤204um', rs: 2 },
      { t: '无', rs: 2 },
      { t: '无', rs: 2 },
      left(inks, { rs: 2, top: true }),
      { t: '', rs: 2 },
      { t: '76.2' },
      { t: '', rs: 2 },
      { t: '94V-0' },
      { t: 'M12B', rs: 2 },
      { t: 'M12BP3', rs: 2 },
      { t: '', rs: 19, noRight: true },
    ],
  },
  {
    n: 387,
    h: 77,
    on: true,
    cells: [
      left('NY2170\nNY2170H\nNY2170M\nNY-A2'),
      { t: '≥0.1mm' },
      left('NY2170P\nNY2170HP\nNY2170MP\nNY-A2P'),
      left('≥0.05mm'),
      { t: '76.2' },
      { t: '94V-0' },
    ],
  },
  {
    n: 388,
    h: 18,
    cells: block(2, '46', 'M13', '85N', { t: '≥0.05mm', rs: 2 }, '85N', '≥0.05mm', '≥0.79mm', outer, '≤102um', '76.2', 'HB', {
      no: {},
      ink: left('南亚（Nan Ya）：\nLP-4G/HP-25D (ALL)', { rs: 17 }),
    }),
  },
  { n: 389, h: 18, cells: [left('VT-901'), left('VT-901PP')] },
  {
    n: 390,
    h: 18,
    cells: block(3, '47', 'M14', 'SE40', { t: '≥0.05mm', rs: 3 }, 'SE40B', '≥0.05mm', '≥0.63mm', outer, '≤102um', '76.2', '94V-0', { no: {} }),
  },
  { n: 391, h: 18, cells: [left('S7439'), left('S7439B')] },
  {
    n: 392,
    h: 37,
    cells: [left('S7439HW\n', { tint: { t: 'S7439C', fg: '#e00000' } }), left('S7439HWB\nS7439CB')],
  },
  {
    n: 393,
    h: 18,
    cells: block(2, '48', 'M15', 'S7038', { t: '≥0.05mm', rs: 2 }, 'S7038B', '≥0.05mm', '≥0.63mm', outer, '≤102um', '76.2', '94V-0'),
  },
  { n: 394, h: 18, cells: [left('SL7038'), left('SL7038B')] },
  {
    n: 395,
    h: 18,
    cells: block(5, '49', 'M15A', 'R-5625##', { t: '≥0.05mm', rs: 3 }, 'R-5620##', '≥0.03mm', '≥0.63mm', outer, '≤68um', '76.2', '94V-0', { prs: 3 }),
  },
  { n: 396, h: 18, cells: [left('R-5720##'), left('R-5620##')] },
  { n: 397, h: 18, cells: [left('R-5725##'), left('R-5620##')] },
  {
    n: 398,
    h: 64,
    cells: [
      left('NY6200\nNY-P1\nNY-P2\nNY6300'),
      { t: '≥0.1mm', noBottom: true },
      left('NY6200P\nNY-P1P\nNY-P2P\nNY6300P'),
      { t: '', rs: 2 },
      { t: '', rs: 2 },
    ],
  },
  {
    n: 399,
    h: 109,
    cells: [
      left('NY3150HF\nNY3170M2\nNY6300SL\nNY3170HF\nNY3170M\nNY3170LK'),
      { t: '≥0.1mm' },
      left('NY3150HFP\nNY3170M2P\nNY6300SLP\nNY3170HFP\nNY3170MP\nNY3170LKP'),
    ],
  },
  {
    n: 400,
    h: 18,
    cells: block(4, '50', 'M16', '1000 L', { t: '≥0.05mm', rs: 4 }, '1000 P', '≥0.05mm', '≥0.63mm', outer, '≤68um', '76.2', '94V-0'),
  },
  { n: 401, h: 18, cells: [left('2000 L'), left('2000 P')] },
  { n: 402, h: 18, cells: [left('3000 L'), left('3000 P')] },
  { n: 403, h: 17, cells: [left('4000 L'), left('4000 P')] },
  {
    n: 404,
    h: 43,
    cells: block(1, '51', 'M17\n', 'RO4730G3', { t: '≥0.26mm' }, 'RO4450F', '≥0.09mm', '≥0.8mm', outer, '≤34um', '50.8', '94V-0', {
      code: 'M17',
      name: { tint: { before: '（', t: '叠构限制', after: '）', fg: '#ff0000' } },
    }),
  },
]

const withWideSigns = (text) => text.split(/([≥≤])/).map((part, i) => (i % 2 ? <Wide key={i}>{part}</Wide> : part))

const DataCell = ({ cell }) => (
  <Cell
    rowSpan={cell.rs}
    colSpan={cell.cs}
    $left={cell.left}
    $indent={cell.indent}
    $top={cell.top}
    $fg={cell.fg}
    $bg={cell.bg}
    $plain={cell.plain}
    $frozen={cell.frozen}
    $noRight={cell.noRight}
    $noBottom={cell.noBottom}
    $selected={cell.selected}
  >
    {withWideSigns(cell.t)}
    {cell.tint && (
      <>
        {cell.tint.before}
        <Tint $fg={cell.tint.fg}>{cell.tint.t}</Tint>
        {cell.tint.after}
      </>
    )}
    {cell.selected && <Selection />}
  </Cell>
)

const SheetRow = ({ row, frozen }) => (
  <tr style={{ height: row.h }}>
    <RowHead scope="row" $on={row.on}>
      {row.n}
    </RowHead>
    <Margin $edge={2} $frozen={frozen} />
    {row.cells.map((cell, index) => (
      <DataCell key={index} cell={cell} />
    ))}
  </tr>
)

const Sheet = () => (
  <SheetArea>
    <Grid>
      <colgroup>
        <col style={{ width: 23 }} />
        {columns.map(([name, width]) => (
          <col key={name} style={{ width }} />
        ))}
        <col />
      </colgroup>
      <thead>
        <tr>
          <Corner>
            <svg width="10" height="9" viewBox="0 0 10 9">
              <path d="M10 0v9H0z" fill="#eaf2fc" />
            </svg>
          </Corner>
          {columns.map(([name]) => (
            <ColHead key={name} scope="col" $on={name === 'C'}>
              {name}
            </ColHead>
          ))}
          <ColHead />
        </tr>
      </thead>
      <tbody>
        <tr style={{ height: 18 }}>
          <RowHead scope="row">1</RowHead>
          <Margin $edge={0} />
          <TopCell colSpan={21} />
        </tr>
        <tr style={{ height: 18 }}>
          <RowHead scope="row">2</RowHead>
          <Margin $edge={2} />
          <TitleCell colSpan={21} rowSpan={2}>
            UL标记添加条件汇总
          </TitleCell>
        </tr>
        <tr style={{ height: 18 }}>
          <RowHead scope="row">3</RowHead>
          <Margin $edge={2} />
        </tr>
        {headRows.map((row) => (
          <SheetRow key={row.n} row={row} frozen={row.n === 6} />
        ))}
        {bodyRows.map((row) => (
          <SheetRow key={row.n} row={row} />
        ))}
        <tr style={{ height: 22 }}>
          <RowHead />
          <Margin $edge={1} />
          {columns.slice(1).map(([name]) => (
            <Cell key={name} $noBottom />
          ))}
          <Cell $noBottom $noRight />
        </tr>
      </tbody>
    </Grid>
    <Arrows width="760" height="620" viewBox="0 184 760 620">
      <g stroke="#00ff00" strokeWidth="5" strokeLinecap="round" strokeLinejoin="round" fill="#00ff00">
        <path d="M738 775L165 460M733 759L412 490" />
        <path d="M148 450l25 7-7 10zM396 479l23 7-8 13z" />
      </g>
    </Arrows>
    <VScroll>
      <svg width="10" height="6" viewBox="0 0 10 6">
        <path d="M0 6l5-6 5 6z" fill="#2f4a77" />
      </svg>
      <Spring $n={639} />
      <VThumb>
        <svg width="8" height="8" viewBox="0 0 8 8">
          <path d="M0 .5h8M0 3h8M0 5.500h8M0 8h8" stroke="#66788f" />
        </svg>
      </VThumb>
      <Spring $n={96} />
      <svg width="10" height="6" viewBox="0 0 10 6">
        <path d="M0 0h10L5 6z" fill="#2f4a77" />
      </svg>
    </VScroll>
  </SheetArea>
)

const Group = ({ title, w, children, launcher }) => (
  <GroupBox $w={w}>
    <GroupBody>{children}</GroupBody>
    <GroupTitle>
      <span>{title}</span>
      {launcher && <Launcher />}
    </GroupTitle>
  </GroupBox>
)

const Combo = ({ label, value, w }) => (
  <ComboBox $w={w}>
    <select aria-label={label} defaultValue={value}>
      <option>{value}</option>
    </select>
    <Caret />
  </ComboBox>
)

const Big = ({ w, icon, text, sub }) => (
  <BigButton $w={w}>
    <BigIcon>{icon}</BigIcon>
    <BigLabel>{text}</BigLabel>
    <BigLabel>
      {sub}
      <Caret />
    </BigLabel>
  </BigButton>
)

const tabs = ['开始', '插入', '页面布局', '公式', '数据', '审阅', '视图']

const styleCells = [
  { t: '样式 1', $size: 12 },
  { t: '常规', $size: 12, $picked: true },
  { t: '差', $size: 14, $fg: '#9c0090', $bg: '#cc99ff' },
  { t: '好', $size: 14, $fg: '#0a7a1e', $bg: '#a0e0e0' },
  { t: '适中', $size: 14, $fg: '#85701a', $bg: '#ffff99' },
  { t: '超链接', $fg: blue, $link: true },
  { t: '计算', $fg: '#e00000', $bold: true, $border: '1px solid #7f7f7f' },
  { t: '检查单元格', $fg: '#fff', $bg: '#969696', $bold: true, $border: '3px double #333' },
  { t: '解释性文本', $fg: '#808080', $italic: true },
  { t: '警告文本', $fg: '#e00000' },
]

const taskItems = [
  { name: 'Shell', icon: <ShellIcon /> },
  { name: 'Notes', icon: <NotesIcon /> },
  { name: 'Disk', icon: <FloppyIcon /> },
  { name: 'Genesis', icon: <RedGIcon /> },
  { name: 'Pcb', icon: <GreenPIcon /> },
  { name: 'Bird', icon: <BirdIcon /> },
  { name: 'Excel', icon: <ExcelIcon />, on: true, stack: true },
  { name: 'Camera', icon: <RingIcon />, stack: true },
  { name: 'X', icon: <CrossIcon />, stack: true },
  { name: 'Word', icon: <WordIcon /> },
]

const App = () => (
  <Window>
    <GlobalStyle />
    <TitleBar>
      <OfficeButton aria-label="Office">
        <OfficeLogo />
      </OfficeButton>
      <TitleSide>
        <QuickAccess>
          <QuickItem aria-label="保存">
            <SaveIcon />
          </QuickItem>
          <QuickItem aria-label="撤消">
            <UndoIcon />
            <Caret color="#2e4f86" w={6} />
          </QuickItem>
          <QuickItem aria-label="恢复">
            <UndoIcon flip color="#a3b2c8" />
            <Caret color="#d5dde8" w={6} />
          </QuickItem>
        </QuickAccess>
        <QuickMore aria-label="自定义">
          <svg width="7" height="7" viewBox="0 0 7 7">
            <path d="M0 .5h7" stroke="#dfe8f5" />
            <path d="M0 3h7L3.500 7z" fill="#dfe8f5" />
          </svg>
        </QuickMore>
      </TitleSide>
      <Title>{'UL标记添加规则  [兼容模式] - Microsoft Excel'}</Title>
      <TitleSide $end>
        <Caption>
          <CaptionButton aria-label="最小化">
            <Glyph d="M0 8h11" color="#fff" />
          </CaptionButton>
          <CaptionButton aria-label="还原">
            <Glyph d="M3 3V1h7v7H8M1 3.500h6v6H1z" color="#fff" />
          </CaptionButton>
          <CaptionButton $close aria-label="关闭">
            <Glyph d="M2 1l7 9M9 1l-7 9" color="#fff" />
          </CaptionButton>
        </Caption>
      </TitleSide>
    </TitleBar>
    <TabRow>
      {tabs.map((tab, index) => (
        <RibbonTab key={tab} $active={index === 0}>
          {tab}
        </RibbonTab>
      ))}
      <BookControls>
        <button aria-label="帮助">
          <HelpIcon />
        </button>
        <button aria-label="最小化窗口">
          <Glyph d="M2 9h7" />
        </button>
        <button aria-label="还原窗口">
          <Glyph d="M3 3V1h7v5H8M1 4h6v5H1z" />
        </button>
        <button aria-label="关闭窗口">
          <Glyph d="M2 1l7 9M9 1l-7 9" />
        </button>
      </BookControls>
    </TabRow>
    <Ribbon>
      <Group title="剪贴板" w={112} launcher>
        <Big w={40} icon={<PasteIcon />} text="粘贴" />
        <Stack $top={1} $inset={4}>
          <SmallButton><CutIcon />剪切</SmallButton>
          <SmallButton><CopyIcon />复制</SmallButton>
          <SmallButton><BrushIcon />格式刷</SmallButton>
        </Stack>
      </Group>
      <Group title="字体" w={234} launcher>
        <Stack $top={11} $gap={10}>
          <Line>
            <ComboPair>
              <Combo label="字体" value="宋体" w={131} />
              <Combo label="字号" value="10" w={46} />
            </ComboPair>
            <ButtonSet>
              <SizeTool $w={22} aria-label="增大字号"><Letter $size={16}>A</Letter><Caret w={5} up /></SizeTool>
              <SizeTool $w={20} aria-label="减小字号"><Letter $size={13}>A</Letter><Caret w={5} /></SizeTool>
            </ButtonSet>
          </Line>
          <Line>
            <ButtonSet>
              <Tool $w={21} $on><Letter>B</Letter></Tool>
              <Tool $w={24}><Letter $italic>I</Letter></Tool>
              <Tool $w={32}><Letter $under>U</Letter><Caret w={5} /></Tool>
            </ButtonSet>
            <ButtonSet>
              <Tool $w={32} aria-label="边框"><BorderIcon /><Caret w={5} /></Tool>
            </ButtonSet>
            <ButtonSet>
              <Tool $w={32} aria-label="填充颜色"><FillIcon /><Caret w={5} /></Tool>
              <Tool $w={31} aria-label="字体颜色"><FontColorIcon /><Caret w={5} /></Tool>
            </ButtonSet>
            <ButtonSet>
              <Tool $w={32} aria-label="拼音"><PhoneticIcon /><Caret w={5} /></Tool>
            </ButtonSet>
          </Line>
        </Stack>
      </Group>
      <Group title="对齐方式" w={229} launcher>
        <Stack $top={11} $gap={10}>
          <Line>
            <ButtonSet>
              <Tool $w={22} aria-label="顶端对齐"><Bars rows={lines(1, [14, 10, 14])} /></Tool>
              <Tool $w={23} $on aria-label="垂直居中"><Bars rows={lines(4, [14, 10, 14])} /></Tool>
              <Tool $w={21} aria-label="底端对齐"><Bars rows={lines(7, [14, 10, 14])} /></Tool>
            </ButtonSet>
            <ButtonSet>
              <Tool $w={30} aria-label="方向"><OrientIcon /><Caret w={5} /></Tool>
            </ButtonSet>
          </Line>
          <Line>
            <ButtonSet>
              <Tool $w={22} aria-label="左对齐"><Bars rows={leftBars} /></Tool>
              <Tool $w={23} $on aria-label="居中"><Bars rows={centred([14, 8, 14, 8, 14, 8])} /></Tool>
              <Tool $w={21} aria-label="右对齐"><Bars rows={rightBars} /></Tool>
            </ButtonSet>
            <ButtonSet>
              <Tool $w={22} aria-label="减少缩进量"><Bars rows={indentBars} indent="out" /></Tool>
              <Tool $w={21} aria-label="增加缩进量"><Bars rows={indentBars} indent="in" /></Tool>
            </ButtonSet>
          </Line>
        </Stack>
        <Rule />
        <Stack $top={11} $gap={10}>
          <Line>
            <WideTool $w={74}><WrapIcon />自动换行</WideTool>
          </Line>
          <Line>
            <WideTool $w={96}>
              <MergeIcon />
              合并后居中
              <SplitArrow><Caret w={5} /></SplitArrow>
            </WideTool>
          </Line>
        </Stack>
      </Group>
      <Group title="数字" w={136} launcher>
        <Stack $top={11} $gap={10}>
          <Line>
            <Combo label="数字格式" value="常规" w={127} />
          </Line>
          <Line>
            <ButtonSet>
              <Tool $w={32} aria-label="会计数字格式"><MoneyIcon /><Caret w={5} /></Tool>
              <Tool $w={23}>%</Tool>
              <Tool $w={22}><Letter $size={18}>,</Letter></Tool>
            </ButtonSet>
            <ButtonSet>
              <Tool $w={22} aria-label="增加小数位数"><DecimalIcon /></Tool>
              <Tool $w={21} aria-label="减少小数位数"><DecimalIcon less /></Tool>
            </ButtonSet>
          </Line>
        </Stack>
      </Group>
      <Group title="样式" w={674}>
        <Big w={50} icon={<CondIcon />} text="条件格式" />
        <Big w={66} icon={<TableFormatIcon />} text="套用" sub="表格格式" />
        <Gallery>
          <Swatches>
            {styleCells.map(({ t, ...look }) => (
              <Swatch key={t} {...look}>
                {t}
              </Swatch>
            ))}
          </Swatches>
          <GalleryScroll>
            <button aria-label="上一行"><Caret up color="#a8b4c4" /></button>
            <button aria-label="下一行"><Caret /></button>
            <button aria-label="其他">
              <svg width="7" height="7" viewBox="0 0 7 7"><path d="M0 0h7v1H0zM0 3h7L3.500 7z" fill="#5a7fb5" /></svg>
            </button>
          </GalleryScroll>
        </Gallery>
      </Group>
      <Group title="单元格" w={134}>
        <Big w={38} icon={<CellsIcon kind="insert" />} text="插入" />
        <Big w={45} icon={<CellsIcon kind="delete" />} text="删除" />
        <Big w={41} icon={<CellsIcon kind="format" />} text="格式" />
      </Group>
      <Group title="编辑" w={176}>
        <Stack $top={1} $inset={4}>
          <SmallButton><SigmaIcon />自动求和<Caret w={6} /></SmallButton>
          <SmallButton><FillDownIcon />填充<Caret w={6} /></SmallButton>
          <SmallButton><EraserIcon />清除<Caret w={6} /></SmallButton>
        </Stack>
        <Big w={46} icon={<SortIcon />} text="排序和" sub="筛选" />
        <Big w={38} icon={<FindIcon />} text="查找和" sub="选择" />
      </Group>
    </Ribbon>
    <FormulaBar>
      <NameBox>
        <input aria-label="名称框" defaultValue="C386" />
        <Caret color="#000" w={8} />
      </NameBox>
      <FxArea>
        <i />
        <FxButton>fx</FxButton>
      </FxArea>
      <FormulaInput aria-label="编辑栏" defaultValue="M12B" />
      <Expand aria-label="展开编辑栏">
        <svg width="8" height="11" viewBox="0 0 8 11" fill="none" stroke="#000" strokeWidth="1.500">
          <path d="M1 1l3 3 3-3M1 6l3 3 3-3" />
        </svg>
      </Expand>
    </FormulaBar>
    <Sheet />
    <Bottom>
      <TabStrip>
        <TabNav>
          <svg width="7" height="8" viewBox="0 0 7 8"><path d="M0 0h1.500v8H0zM7 0v8L2 4z" fill="#1c3d78" /></svg>
          <svg width="5" height="8" viewBox="0 0 5 8"><path d="M5 0v8L0 4z" fill="#1c3d78" /></svg>
          <svg width="5" height="8" viewBox="0 0 5 8"><path d="M0 0v8l5-4z" fill="#1c3d78" /></svg>
          <svg width="7" height="8" viewBox="0 0 7 8"><path d="M5.500 0H7v8H5.500zM0 0v8l5-4z" fill="#1c3d78" /></svg>
        </TabNav>
        <SheetTab $w={73}>更新记录</SheetTab>
        <SheetTab $w={113}>程序自动化规则</SheetTab>
        <SheetTab $w={73} $fg="#000" $bg="linear-gradient(#fff, #ffe2e2 55%, #ff3b3b 95%)">
          条件汇总
        </SheetTab>
        <SheetTab $w={113} $fg="#fff" $bg="linear-gradient(#ff9a9a, #ff2a2a 50%, #f23a3a)">
          公司UL标记清单
        </SheetTab>
        <SheetTab $w={115}>UL沟通会议简报</SheetTab>
        <SheetTab $w={40} aria-label="插入工作表">
          <svg width="15" height="14" viewBox="0 0 15 14">
            <path d="M5 3h9v8l-3 2H5z" fill="#f3f7fd" stroke="#5a7099" />
            <path d="M4 0v8M0 4h8M1 1l6 6M7 1L1 7" stroke="#e8962e" />
          </svg>
        </SheetTab>
        <HScroll>
          <SplitGrip />
          <svg width="5" height="9" viewBox="0 0 5 9"><path d="M5 0v9L0 4.500z" fill="#1c3d78" /></svg>
          <HThumb>
            <svg width="8" height="8" viewBox="0 0 8 8"><path d="M.5 0v8M3 0v8M5.500 0v8M8 0v8" stroke="#66788f" /></svg>
          </HThumb>
          <svg width="5" height="9" viewBox="0 0 5 9"><path d="M0 0v9l5-4.500z" fill="#1c3d78" /></svg>
        </HScroll>
      </TabStrip>
      <StatusBar>
        <StatusText>就绪</StatusText>
        <StatusRight>
          <ViewButtons>
            <ViewButton $on aria-label="普通">
              <svg width="13" height="13" viewBox="0 0 13 13" fill="#fff" stroke="#555"><path d="M.5.500h12v12H.5zM4.500.500v12M8.500.500v12M.5 4.500h12M.5 8.500h12" /></svg>
            </ViewButton>
            <ViewButton aria-label="页面布局视图">
              <svg width="13" height="13" viewBox="0 0 13 13" fill="#fff" stroke="#666"><path d="M.5.500h12v12H.5z" fill="#aaa" /><path d="M3.500 2.500h6v8h-6zM5 5h3M5 7h3" /></svg>
            </ViewButton>
            <ViewButton aria-label="分页预览">
              <svg width="13" height="13" viewBox="0 0 13 13" fill="#fff" stroke="#666"><path d="M.5.500h12v12H.5zM.5.500h4v7h-4zM6.500.500h4v7h-4z" /></svg>
            </ViewButton>
          </ViewButtons>
          <ZoomValue>85%</ZoomValue>
          <button aria-label="缩小">
            <svg width="17" height="17" viewBox="0 0 17 17" fill="#eef4fc" stroke="#4b6b9c"><circle cx="8.500" cy="8.500" r="7.500" /><path d="M4 8.500h9" /></svg>
          </button>
          <ZoomRange type="range" aria-label="显示比例" min="10" max="400" defaultValue="180" />
          <button aria-label="放大">
            <svg width="17" height="17" viewBox="0 0 17 17" fill="#eef4fc" stroke="#4b6b9c"><circle cx="8.500" cy="8.500" r="7.500" /><path d="M4 8.500h9M8.500 4v9" strokeWidth="1.500" /></svg>
          </button>
        </StatusRight>
      </StatusBar>
      <ImeBar>
        <svg width="9" height="18" viewBox="0 0 9 18"><path d="M1 0v18M4.500 0v18M8 0v18" stroke="#15181d" strokeWidth="2" strokeDasharray="2 2" /></svg>
        <svg width="16" height="14" viewBox="0 0 16 14"><path d="M1 5h14v8H1z" fill="#d5d8dc" stroke="#777" /><path d="M3 8h10M3 10h10" stroke="#555" strokeDasharray="1 1" /><path d="M8 5q0-3 6-4" stroke="#999" fill="none" /></svg>
        <HelpIcon size={16} />
        <svg width="8" height="18" viewBox="0 0 8 18"><path d="M1 3h5v2H1zM0 12h7l-3.500 4z" fill="#fff" /></svg>
      </ImeBar>
    </Bottom>
    <TaskBar>
      <StartButton aria-label="开始菜单">
        <StartOrb />
      </StartButton>
      {taskItems.map((item) => (
        <TaskButton key={item.name} aria-label={item.name} $on={item.on} $stack={item.stack}>
          {item.icon}
        </TaskButton>
      ))}
      <Tray>
        <svg width="16" height="8" viewBox="0 0 16 8"><path d="M4 7h9L8.500 1z" fill="#e8eef6" /></svg>
        <TrayIcon kind="alert" />
        <span />
        <TrayIcon kind="flag" />
        <TrayIcon kind="sound" />
        <TrayIcon kind="net" />
      </Tray>
      <Clock>
        19:21
        <br />
        2022/7/7
      </Clock>
      <ShowDesktop aria-label="显示桌面" />
    </TaskBar>
  </Window>
)

export default App
